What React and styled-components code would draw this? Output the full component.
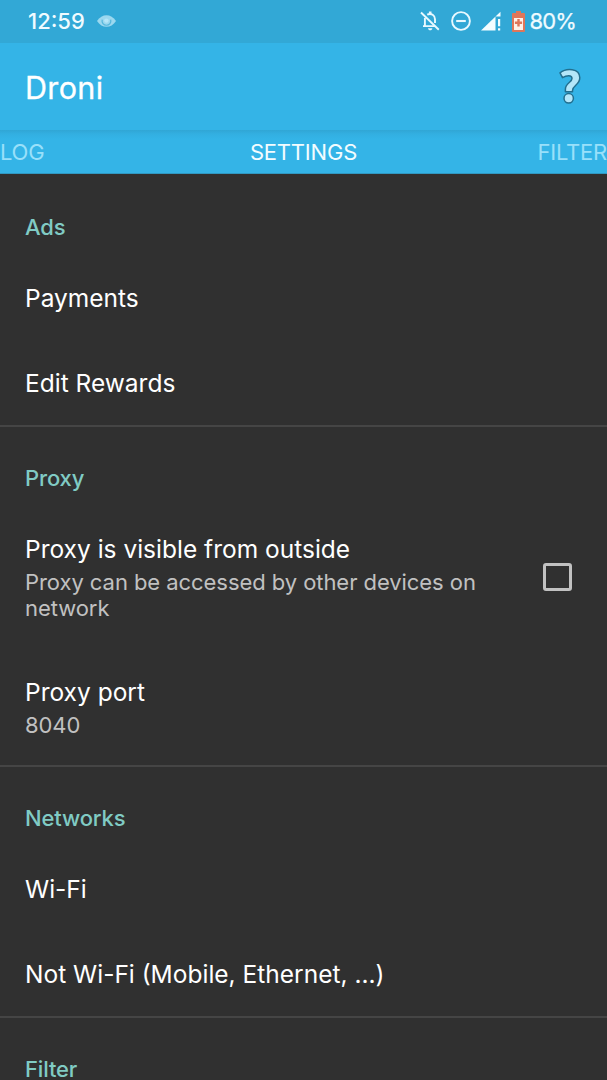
import React from "react";
import styled, { createGlobalStyle } from "styled-components";

const GlobalStyle = createGlobalStyle`
  * { box-sizing: border-box; }
  body {
    margin: 0;
    background: #303030;
    font-family: Inter, Roboto, sans-serif;
    color: #fff;
  }
`;

const Screen = styled.div`
  width: 607px;
  height: 1080px;
  overflow: hidden;
  display: flex;
  flex-direction: column;
  background: #303030;
`;

const StatusBar = styled.header`
  flex: none;
  height: 43px;
  padding: 0 31px 1px 28px;
  display: flex;
  align-items: center;
  justify-content: space-between;
  background: #32a8d6;
  color: #f0fbff;
`;

const StatusGroup = styled.div`
  display: flex;
  align-items: center;
`;

const StatusText = styled.span`
  font-size: 22px;
  line-height: 26px;
  font-weight: 500;
`;

const Percent = styled(StatusText)`
  margin-left: 5px;
  font-weight: 400;
  letter-spacing: -0.9px;
  -webkit-text-stroke: 0.25px currentColor;
`;

const Icon = styled.svg`
  display: block;
  flex: none;
  margin-left: ${(p) => p.$gap || 0}px;
`;

const AppBar = styled.div`
  flex: none;
  height: 87px;
  padding: 0 25px;
  display: flex;
  align-items: center;
  justify-content: space-between;
  background: #34b4e7;
`;

const AppTitle = styled.h1`
  margin: 0;
  padding-top: 2px;
  font-size: 30.5px;
  line-height: 40px;
  font-weight: 400;
  letter-spacing: 0.35px;
  -webkit-text-stroke: 0.3px currentColor;
`;

const HelpButton = styled.button`
  border: 0;
  padding: 0;
  background: none;
`;

const TabStrip = styled.nav`
  flex: none;
  height: 44px;
  display: grid;
  grid-template-columns: 1fr auto 1fr;
  align-items: center;
  background: linear-gradient(#30a6d5, #32afe1 4px, #34b4e7 9px);
  border-bottom: 1px solid #3198c1;
`;

const Tab = styled.span`
  font-size: 22px;
  line-height: 28px;
  padding-top: 1px;
  letter-spacing: -0.2px;
  text-align: ${(p) => p.$align || "center"};
  color: ${(p) => (p.$active ? "#f2fcff" : "#99e0fa")};
`;

const Section = styled.section`
  flex: none;
  border-bottom: 2px solid #454545;
`;

const SectionTitle = styled.h2`
  margin: 0;
  height: ${(p) => p.$height || 79}px;
  padding: ${(p) => p.$top || 37}px 25px 0;
  font-size: 22px;
  line-height: 28px;
  font-weight: 500;
  letter-spacing: -0.15px;
  color: #80cbc4;
`;

const Row = styled.div`
  height: ${(p) => p.$height || 85}px;
  padding: 0 35px 0 25px;
  display: flex;
  align-items: center;
  justify-content: space-between;
`;

const RowTitle = styled.div`
  font-size: 24.5px;
  line-height: 32px;
`;

const Summary = styled.div`
  max-width: 470px;
  padding-top: 4px;
  margin-bottom: -1px;
  font-size: 22px;
  line-height: 26px;
  letter-spacing: -0.06px;
  color: #c1c1c1;
`;

const Checkbox = styled.span`
  flex: none;
  width: 29px;
  height: 28px;
  border: 3px solid #c1c1c1;
  border-radius: 3px;
`;

function EyeIcon() {
  return (
    <Icon $gap={12} width="19" height="13" viewBox="0 0 19 13">
      <path d="M0 6C5-1.7 14-1.7 19 6C14 13.8 5 13.8 0 6Z" fill="#9bd8ef" />
      <path d="M5.2 4.7A4.4 4.4 0 1 0 13.7 4.7" fill="none" stroke="#55b7dc" strokeWidth="1.2" />
      <circle cx="9.4" cy="5.6" r="2.2" fill="#b5e6f8" />
    </Icon>
  );
}

function BellOffIcon() {
  return (
    <Icon width="20" height="20" viewBox="0 0 20 20" fill="none" stroke="#e9f9ff" strokeWidth="1.9">
      <path d="M1 1.5L18.8 18.8" />
      <path d="M4.9 7V15M3 15.1H15.2M7.2 3.7C11.4 1.6 15 4.6 15 8.3V12" />
      <path d="M10.2 0.5V3" strokeWidth="2.6" />
      <path d="M8 17.2H12.4C12.2 20 8.2 20 8 17.2Z" fill="#e9f9ff" stroke="none" />
    </Icon>
  );
}

function DoNotDisturbIcon() {
  return (
    <Icon $gap={11} width="20" height="20" viewBox="0 0 20 20" fill="none" stroke="#e9f9ff" strokeWidth="1.9">
      <circle cx="10" cy="10" r="8.9" />
      <path d="M5.2 10H14.8" strokeWidth="2.1" />
    </Icon>
  );
}

function SignalIcon() {
  return (
    <Icon $gap={10} width="20" height="20" viewBox="0 0 20 20" fill="#f4fdff">
      <path d="M0 19.4L14.5 5.5V19.4Z" />
      <path d="M14.5 5.5L19.5 .8V5.5Z" />
      <path d="M17 8H19.2V15.2H17ZM17 17.2H19.2V19.4H17Z" />
    </Icon>
  );
}

function BatteryIcon() {
  return (
    <Icon $gap={11} width="13" height="21" viewBox="0 0 13 21">
      <path d="M4 0H9V2H12Q13 2 13 3V20Q13 21 12 21H1Q0 21 0 20V3Q0 2 1 2H4Z" fill="#df765a" />
      <path d="M2 7H11V19H2Z" fill="#fff1e9" />
      <path d="M6.5 8V15.4M2.9 11.7H10.1" stroke="#df765a" strokeWidth="2.4" />
    </Icon>
  );
}

function HelpIcon() {
  return (
    <Icon width="24" height="38" viewBox="0 0 24 38">
      <path
        d="M2 4.8C8-.2 21.8-.3 21.8 9.8C21.8 17.2 14.5 17 14.5 22.6V23.7H7.4V21.2C7.4 14.6 14 14.7 14 10.5C14 6.6 8.6 7.1 4.5 9.7Z"
        fill="#b3e6f9"
        stroke="#226f8f"
        strokeWidth="1.5"
        strokeLinejoin="round"
      />
      <circle cx="10.7" cy="30.3" r="4.7" fill="#b3e6f9" stroke="#226f8f" strokeWidth="1.5" />
    </Icon>
  );
}

export default function App() {
  return (
    <Screen>
      <GlobalStyle />
      <StatusBar>
        <StatusGroup>
          <StatusText>12:59</StatusText>
          <EyeIcon />
        </StatusGroup>
        <StatusGroup>
          <BellOffIcon />
          <DoNotDisturbIcon />
          <SignalIcon />
          <BatteryIcon />
          <Percent>80%</Percent>
        </StatusGroup>
      </StatusBar>
      <AppBar>
        <AppTitle>Droni</AppTitle>
        <HelpButton aria-label="Help"><HelpIcon /></HelpButton>
      </AppBar>
      <TabStrip>
        <Tab $align="left">LOG</Tab>
        <Tab $active>SETTINGS</Tab>
        <Tab $align="right">FILTER</Tab>
      </TabStrip>

      <Section>
        <SectionTitle $height={81} $top={39}>Ads</SectionTitle>
        <Row><RowTitle>Payments</RowTitle></Row>
        <Row><RowTitle>Edit Rewards</RowTitle></Row>
      </Section>

      <Section>
        <SectionTitle>Proxy</SectionTitle>
        <Row $height={141}>
          <div>
            <RowTitle>Proxy is visible from outside</RowTitle>
            <Summary>Proxy can be accessed by other devices on network</Summary>
          </div>
          <Checkbox role="checkbox" aria-checked="false" />
        </Row>
        <Row $height={118}>
          <div>
            <RowTitle>Proxy port</RowTitle>
            <Summary>8040</Summary>
          </div>
        </Row>
      </Section>

      <Section>
        <SectionTitle>Networks</SectionTitle>
        <Row><RowTitle>Wi-Fi</RowTitle></Row>
        <Row><RowTitle>Not Wi-Fi (Mobile, Ethernet, ...)</RowTitle></Row>
      </Section>

      <Section>
        <SectionTitle>Filter</SectionTitle>
      </Section>
    </Screen>
  );
}
